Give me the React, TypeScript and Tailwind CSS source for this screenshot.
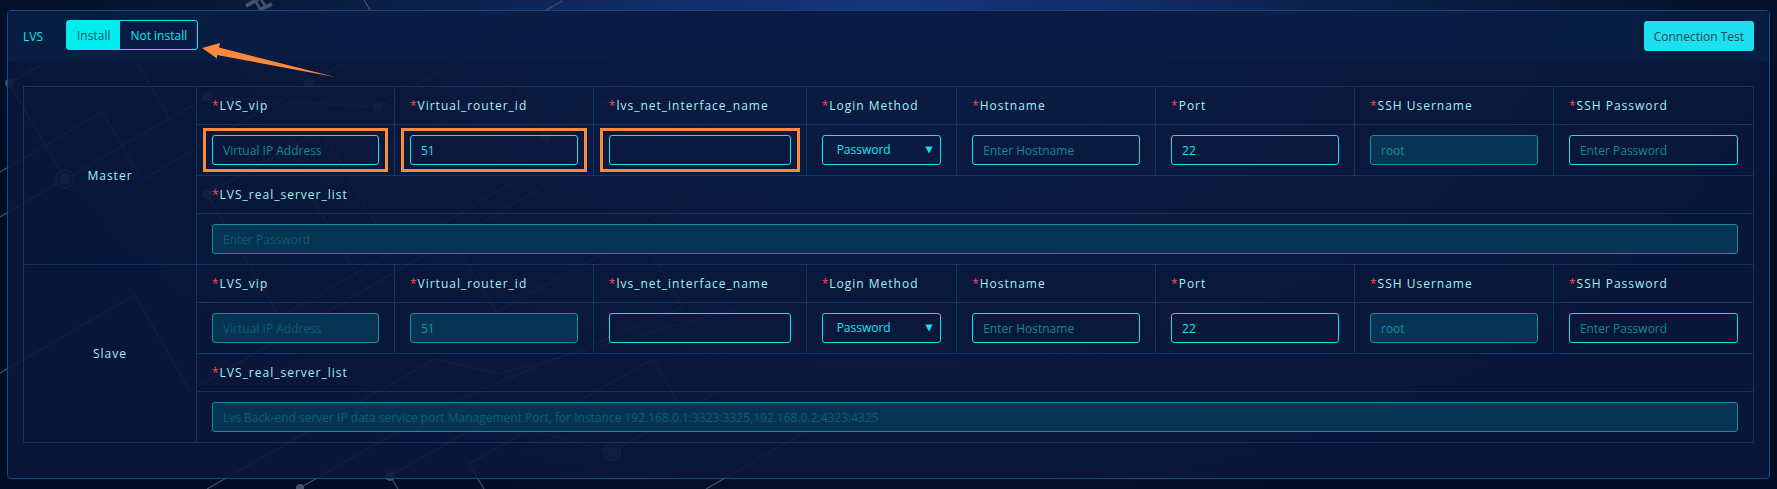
import { Fragment } from "react";

type Field = {
  key: string;
  label: string;
  placeholder?: string;
  value?: string;
  disabled?: boolean;
  marked?: boolean;
  select?: boolean;
  password?: boolean;
};

type Server = { name: string; fields: Field[]; listPlaceholder: string };

const servers: Server[] = [
  {
    name: "Master",
    listPlaceholder: "Enter Password",
    fields: [
      { key: "vip", label: "LVS_vip", placeholder: "Virtual IP Address", marked: true },
      { key: "router", label: "Virtual_router_id", value: "51", marked: true },
      { key: "net", label: "lvs_net_interface_name", marked: true },
      { key: "method", label: "Login Method", select: true },
      { key: "host", label: "Hostname", placeholder: "Enter Hostname" },
      { key: "port", label: "Port", value: "22" },
      { key: "user", label: "SSH Username", value: "root", disabled: true },
      { key: "pass", label: "SSH Password", placeholder: "Enter Password", password: true },
    ],
  },
  {
    name: "Slave",
    listPlaceholder:
      "Lvs Back-end server IP data service port Management Port, for Instance 192.168.0.1:3323:3325,192.168.0.2:4323:4325",
    fields: [
      { key: "vip", label: "LVS_vip", placeholder: "Virtual IP Address", disabled: true },
      { key: "router", label: "Virtual_router_id", value: "51", disabled: true },
      { key: "net", label: "lvs_net_interface_name" },
      { key: "method", label: "Login Method", select: true },
      { key: "host", label: "Hostname", placeholder: "Enter Hostname" },
      { key: "port", label: "Port", value: "22" },
      { key: "user", label: "SSH Username", value: "root", disabled: true },
      { key: "pass", label: "SSH Password", placeholder: "Enter Password", password: true },
    ],
  },
];

const cell = "border border-[#0d3767] px-[15px]";
const control =
  "block h-[30px] w-full rounded-[3px] border border-[#14e2ee] bg-transparent text-xs text-[#14e6f2] outline-none placeholder:text-[#0f8c90] disabled:border-[#118fa1] disabled:bg-[#083454] disabled:text-[#1090a5] disabled:placeholder:text-[#0a5f70]";

function Label({ id, text }: { id: string; text: string }) {
  return (
    <label htmlFor={id} className="whitespace-nowrap">
      <span className="text-[#ff464c]">*</span>
      {text}
    </label>
  );
}

function Control({ id, field }: { id: string; field: Field }) {
  return (
    <div className="relative">
      {field.select ? (
        <>
          <select id={id} className={`${control} appearance-none pl-[14px] pr-6`}>
            <option>Password</option>
            <option>Key</option>
          </select>
          <svg viewBox="0 0 8 8" className="pointer-events-none absolute right-2 top-[11px] size-2 fill-[#14dfeb]">
            <path d="M0.3 0.6H7.7L4 7.6Z" />
          </svg>
        </>
      ) : (
        <input
          id={id}
          type={field.password ? "password" : "text"}
          placeholder={field.placeholder}
          defaultValue={field.value}
          disabled={field.disabled}
          className={`${control} px-[10px]`}
        />
      )}
      {field.marked && (
        <span className="pointer-events-none absolute -inset-x-[9px] -inset-y-[7px] border-3 border-[#fb8b3a]" />
      )}
    </div>
  );
}

function Network() {
  return (
    <svg width="820" height="489" className="absolute left-0 top-0" fill="none" stroke="#455069" strokeWidth="1.2">
      <path d="M9 83L48 61L110 25M9 83L65 179M115 27L169 117M0 172L102 112L142 180L309 83L348 61M0 217L65 179L207 97L378 107L458 61L562 1M309 83L297 61" />
      <path d="M207 194L280 317L450 219L513 182M207 194L322 130L378 228M313 200L366 289L545 186M360 168L513 82L545 137L617 95M638 230L680 206" />
      <path d="M0 373L135 295L190 391L437 248M207 489L435 359L498 374L739 308M300 488L440 407L683 307L650 251M459 249L496 312L610 250" />
      <path d="M390 476L470 430L530 430L612 452L720 390M390 476L398 489M484 489L469 464L653 359L678 402M706 489L805 432M364 0L370 10" />
      <g fill="#455069" stroke="none">
        <circle cx="9.500" cy="83" r="4.500" />
        <circle cx="207" cy="97" r="5" />
        <circle cx="309" cy="83" r="5" />
        <circle cx="378" cy="107" r="5" />
        <circle cx="207" cy="194" r="5" />
        <circle cx="545" cy="137" r="5" />
        <circle cx="390" cy="476" r="5" />
        <circle cx="300" cy="488" r="4" />
        <circle cx="65" cy="179" r="6" />
        <circle cx="612" cy="452" r="5.500" />
      </g>
      <circle cx="65" cy="179" r="9" strokeWidth="2" />
      <circle cx="612" cy="452" r="8" strokeWidth="2" />
      <path strokeWidth="4" d="M246 6L258 -1M259 10L272 4" />
      <path strokeWidth="2.500" d="M255 1L261 10M260 -2L266 7" />
    </svg>
  );
}

export default function App() {
  return (
    <div className="relative min-h-screen bg-[#030c26] bg-[radial-gradient(ellipse_960px_560px_at_50%_-20px,#15357e_0%,#132e6c_20%,#0c224d_45%,#061633_75%,#030c26_100%)] px-[7px] py-[10px] font-['Open_Sans','Noto_Sans',sans-serif] text-xs text-[#00edf5]">
      <Network />
      <section className="relative rounded-[4px] border border-[#104a88] bg-[#0a183b]/88">
        <header className="flex h-[50px] items-center justify-between bg-[#0a1d44]/90 px-[15px]">
          <div className="flex items-center gap-[23px]">
            <h1 className="pt-0.5">LVS</h1>
            <div className="relative -mt-0.5 flex h-[30px] rounded-[3px] border border-[#00edf5] bg-[#0a1a42]">
              <button type="button" className="bg-[#00edf0] px-[10px] pt-0.5 text-[#2c5058]">
                Install
              </button>
              <button type="button" className="px-[10px] pt-0.5">
                Not install
              </button>
              <svg
                width="136"
                height="38"
                viewBox="0 0 136 38"
                className="pointer-events-none absolute left-full top-5 z-10 ml-[5px]"
                fill="#fb8b3a"
              >
                <path d="M0 7L18 2L17 6.500L133 36L15 14L15 17.500Z" />
              </svg>
            </div>
          </div>
          <button type="button" className="h-[30px] rounded-[3px] bg-[#1cdfef] px-[10px] pt-0.5 text-[#2b454f]">
            Connection Test
          </button>
        </header>

        <div className="px-[15px] pb-[35px] pt-[25px]">
          <table className="w-full table-fixed border-collapse text-left text-[#a4eff3]">
            <colgroup>
              <col className="w-[10%]" />
              <col className="w-[11.44%]" />
              <col className="w-[11.5%]" />
              <col className="w-[12.3%]" />
              <col className="w-[8.7%]" />
              <col className="w-[11.5%]" />
              <col className="w-[11.5%]" />
              <col className="w-[11.5%]" />
              <col />
            </colgroup>
            <tbody>
              {servers.map((server) => (
                <Fragment key={server.name}>
                  <tr className="h-[38px]">
                    <th scope="rowgroup" rowSpan={4} className={`${cell} text-center font-normal tracking-[1px]`}>
                      {server.name}
                    </th>
                    {server.fields.map((field) => (
                      <th key={field.key} className={`${cell} font-normal tracking-[1px]`}>
                        <Label id={`${server.name}-${field.key}`} text={field.label} />
                      </th>
                    ))}
                  </tr>
                  <tr>
                    {server.fields.map((field) => (
                      <td key={field.key} className={`${cell} py-[10px]`}>
                        <Control id={`${server.name}-${field.key}`} field={field} />
                      </td>
                    ))}
                  </tr>
                  <tr className="h-[38px]">
                    <th colSpan={8} className={`${cell} font-normal tracking-[1px]`}>
                      <Label id={`${server.name}-list`} text="LVS_real_server_list" />
                    </th>
                  </tr>
                  <tr>
                    <td colSpan={8} className={`${cell} py-[10px]`}>
                      <Control
                        id={`${server.name}-list`}
                        field={{
                          key: "list",
                          label: "LVS_real_server_list",
                          placeholder: server.listPlaceholder,
                          disabled: true,
                        }}
                      />
                    </td>
                  </tr>
                </Fragment>
              ))}
            </tbody>
          </table>
        </div>
      </section>
    </div>
  );
}
